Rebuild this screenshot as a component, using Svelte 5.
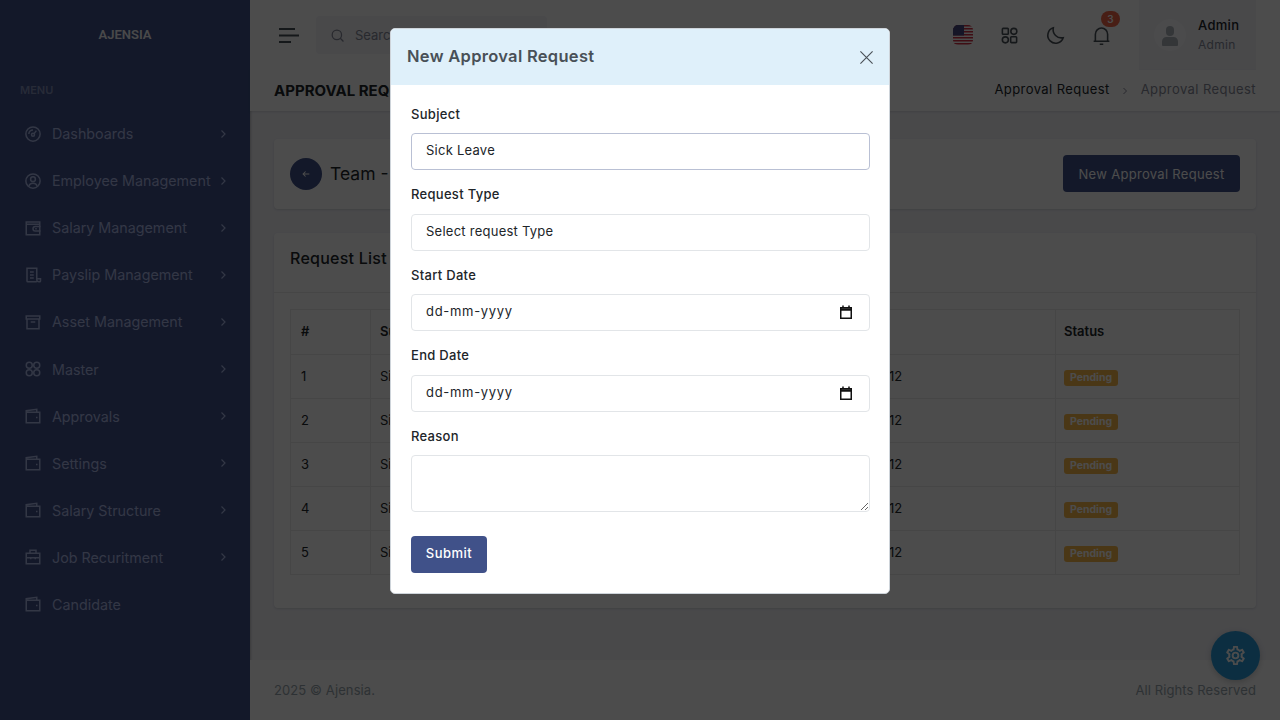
<script>
  const menu = [
    { label: 'Dashboards', icon: 'gauge', arrow: true },
    { label: 'Employee Management', icon: 'user', arrow: true },
    { label: 'Salary Management', icon: 'wallet', arrow: true },
    { label: 'Payslip Management', icon: 'bill', arrow: true },
    { label: 'Asset Management', icon: 'archive', arrow: true },
    { label: 'Master', icon: 'apps', arrow: true },
    { label: 'Approvals', icon: 'purse', arrow: true },
    { label: 'Settings', icon: 'purse', arrow: true },
    { label: 'Salary Structure', icon: 'purse', arrow: true },
    { label: 'Job Recuritment', icon: 'case', arrow: true },
    { label: 'Candidate', icon: 'purse', arrow: false }
  ]

  const rows = [1, 2, 3, 4, 5]
  const stripes = [0, 1, 2, 3, 4, 5, 6]
  const cog = 'M12,8A4,4 0 0,1 16,12A4,4 0 0,1 12,16A4,4 0 0,1 8,12A4,4 0 0,1 12,8M12,10A2,2 0 0,0 10,12A2,2 0 0,0 12,14A2,2 0 0,0 14,12A2,2 0 0,0 12,10M10,22C9.75,22 9.54,21.82 9.5,21.58L9.13,18.93C8.5,18.68 7.96,18.34 7.44,17.94L4.95,18.95C4.73,19.03 4.46,18.95 4.34,18.73L2.34,15.27C2.21,15.05 2.27,14.78 2.46,14.63L4.57,12.97L4.5,12L4.57,11L2.46,9.37C2.27,9.22 2.21,8.95 2.34,8.73L4.34,5.27C4.46,5.05 4.73,4.96 4.95,5.05L7.44,6.05C7.96,5.66 8.5,5.32 9.13,5.07L9.5,2.42C9.54,2.18 9.75,2 10,2H14C14.25,2 14.46,2.18 14.5,2.42L14.87,5.07C15.5,5.32 16.04,5.66 16.56,6.05L19.05,5.05C19.27,4.96 19.54,5.05 19.66,5.27L21.66,8.73C21.79,8.95 21.73,9.22 21.54,9.37L19.43,11L19.5,12L19.43,13L21.54,14.63C21.73,14.78 21.79,15.05 21.66,15.27L19.66,18.73C19.54,18.95 19.27,19.04 19.05,18.95L16.56,17.95C16.04,18.34 15.5,18.68 14.87,18.93L14.5,21.58C14.46,21.82 14.25,22 14,22H10M11.25,4L10.88,6.61C9.68,6.86 8.62,7.5 7.85,8.39L5.44,7.35L4.69,8.65L6.8,10.2C6.4,11.37 6.4,12.64 6.8,13.8L4.68,15.36L5.43,16.66L7.86,15.62C8.63,16.5 9.68,17.14 10.87,17.38L11.24,20H12.76L13.13,17.39C14.32,17.14 15.37,16.5 16.14,15.62L18.57,16.66L19.32,15.36L17.2,13.81C17.6,12.64 17.6,11.37 17.2,10.2L19.31,8.65L18.56,7.35L16.15,8.39C15.38,7.5 14.32,6.86 13.12,6.62L12.75,4H11.25Z'
</script>

{#snippet navIcon(name)}
  <svg class="nav-icon" viewBox="0 0 24 24" fill="none" stroke="currentColor" stroke-width="2">
    {#if name === 'gauge'}
      <circle cx="12" cy="12" r="9.5" />
      <circle cx="12" cy="13" r="2" />
      <path d="M13.5 11.5 16.5 7.5M6.5 12a5.5 5.5 0 0 1 5.5-5.5" />
    {:else if name === 'user'}
      <circle cx="12" cy="12" r="9.5" />
      <circle cx="12" cy="9.5" r="3.2" />
      <path d="M6.5 18.500c1-2.600 3-3.600 5.500-3.600s4.500 1 5.500 3.600" />
    {:else if name === 'wallet'}
      <path d="M21 7V4H3v17h18V7H3" />
      <path d="M22 10h-7a3 3 0 0 0 0 6h7" />
      <path d="M15 13h2" />
    {:else if name === 'bill'}
      <path d="M17 21H5a1 1 0 0 1-1-1V3h13v15a3 3 0 0 0 3 3h1a1 1 0 0 0 1-1v-3h-5" />
      <path d="M8 8h5M8 12h5M8 16h5" />
    {:else if name === 'archive'}
      <path d="M3 4h18v4H3zM4 8v13h16V8M9 12h6" />
    {:else if name === 'apps'}
      <circle cx="7" cy="7" r="4" />
      <circle cx="17" cy="7" r="4" />
      <circle cx="7" cy="17" r="4" />
      <circle cx="17" cy="17" r="4" />
    {:else if name === 'purse'}
      <path d="M3 7V21H21V7H3V5L17 3V7" />
      <path d="M16 14h2" />
    {:else}
      <path d="M8 7V3h8v4M3 7h18v14H3zM3 13h18M9 12v3M15 12v3" />
    {/if}
  </svg>
{/snippet}

<div class="layout">
  <aside class="sidebar">
    <div class="logo">AJENSIA</div>
    <div class="menu-title">MENU</div>
    <nav>
      {#each menu as item}
        <div class="nav-link">
          {@render navIcon(item.icon)}
          <span>{item.label}</span>
          {#if item.arrow}
            <svg class="chevron" viewBox="0 0 24 24" fill="none" stroke="currentColor" stroke-width="2.400">
              <path d="m9 5 7 7-7 7" />
            </svg>
          {/if}
        </div>
      {/each}
    </nav>
  </aside>

  <div class="main">
    <header class="topbar">
      <svg class="hamburger" viewBox="0 0 20 15" fill="none" stroke="currentColor" stroke-width="2">
        <path d="M0 1h16M0 7.500h20M0 14h12" />
      </svg>
      <div class="search">
        <svg viewBox="0 0 24 24" fill="none" stroke="currentColor" stroke-width="2">
          <circle cx="11" cy="11" r="7.500" />
          <path d="m16.500 16.500 5 5" />
        </svg>
        <span>Search...</span>
      </div>
      <div class="top-actions">
        <svg class="flag" viewBox="0 0 20 20">
          <defs>
            <clipPath id="flag-clip"><rect width="20" height="20" rx="5" /></clipPath>
          </defs>
          <g clip-path="url(#flag-clip)">
            <rect width="20" height="20" fill="#fff" />
            {#each stripes as s}
              <rect y={s * 3} width="20" height="1.500" fill="#d02f44" />
            {/each}
            <rect width="11" height="10.500" fill="#46467f" />
          </g>
        </svg>
        <svg class="top-icon apps" viewBox="0 0 24 24" fill="none" stroke="currentColor" stroke-width="2">
          <rect x="3" y="3" width="7.500" height="7.500" rx="1" />
          <circle cx="17.500" cy="6.750" r="3.800" />
          <circle cx="6.750" cy="17.500" r="3.800" />
          <rect x="13.500" y="13.500" width="7.500" height="7.500" rx="1" />
        </svg>
        <svg class="top-icon moon" viewBox="0 0 24 24" fill="none" stroke="currentColor" stroke-width="1.800">
          <path d="M9.500 3.200a9 9 0 1 0 11.300 11.300A9.500 9.500 0 0 1 9.500 3.200z" />
        </svg>
        <div class="bell">
          <svg class="top-icon" viewBox="0 0 24 24" fill="none" stroke="currentColor" stroke-width="1.800">
            <path d="M3 18.500h18M5 18.500v-8a7 7 0 0 1 14 0v8M10 22h4" />
          </svg>
          <span class="count">3</span>
        </div>
      </div>
      <div class="profile">
        <div class="avatar">
          <svg viewBox="0 0 24 24" fill="currentColor">
            <rect x="8" y="3" width="8" height="10" rx="4" />
            <path d="M4 22v-3.500A4.500 4.500 0 0 1 8.500 14h7a4.500 4.500 0 0 1 4.500 4.500V22a1 1 0 0 1-1 1H5a1 1 0 0 1-1-1z" />
          </svg>
        </div>
        <div class="who">
          <strong>Admin</strong>
          <small>Admin</small>
        </div>
      </div>
    </header>

    <div class="page-title">
      <h4>APPROVAL REQUEST</h4>
      <div class="crumbs">
        <span>Approval Request</span>
        <svg viewBox="0 0 24 24" fill="none" stroke="currentColor" stroke-width="2"><path d="m9 6 6 6-6 6" /></svg>
        <span class="muted">Approval Request</span>
      </div>
    </div>

    <main class="content">
      <section class="card head-card">
        <div class="back-title">
          <span class="back">
            <svg viewBox="0 0 24 24" fill="none" stroke="currentColor" stroke-width="2.500"><path d="M20 12H5M11 6l-6 6 6 6" /></svg>
          </span>
          <span class="team">Team - Approval Request</span>
        </div>
        <button class="btn-dark">New Approval Request</button>
      </section>

      <section class="card list-card">
        <h5 class="card-head">Request List</h5>
        <div class="card-body">
          <table>
            <colgroup>
              <col style="width: 80px" />
              <col style="width: 260px" />
              <col style="width: 189px" />
              <col style="width: 236px" />
              <col />
            </colgroup>
            <thead>
              <tr>
                <th>#</th>
                <th>Subject</th>
                <th>Request Type</th>
                <th>Date</th>
                <th>Status</th>
              </tr>
            </thead>
            <tbody>
              {#each rows as n}
                <tr>
                  <td>{n}</td>
                  <td>Sick Leave</td>
                  <td>Leave</td>
                  <td>2025-02-12</td>
                  <td><span class="pending">Pending</span></td>
                </tr>
              {/each}
            </tbody>
          </table>
        </div>
      </section>
    </main>

    <footer class="footer">
      <span>2025 © Ajensia.</span>
      <span>All Rights Reserved</span>
    </footer>
  </div>
</div>

<button class="fab" aria-label="Settings">
  <svg viewBox="0 0 24 24" fill="currentColor"><path d={cog} /></svg>
</button>

<div class="backdrop"></div>

<div class="modal-wrap">
  <div class="modal">
    <div class="modal-header">
      <h5>New Approval Request</h5>
      <svg viewBox="0 0 16 16" fill="none" stroke="currentColor" stroke-width="1.200" aria-label="Close">
        <path d="M1.500 1.500l13 13M14.500 1.500l-13 13" />
      </svg>
    </div>
    <form class="modal-body">
      <label for="subject">Subject</label>
      <input id="subject" class="field focused" type="text" value="Sick Leave" />

      <label for="type">Request Type</label>
      <div id="type" class="field">Select request Type</div>

      <label for="start">Start Date</label>
      <div id="start" class="field date">
        <span>dd-mm-yyyy</span>
        <svg viewBox="0 0 16 16" fill="none" stroke="#111" stroke-width="1.500">
          <path d="M2.750 3.750h10.500v10.500H2.750z" />
          <path d="M2.750 5.500h10.500" stroke-width="2.500" />
          <path d="M5 1.500v2M11 1.500v2" />
        </svg>
      </div>

      <label for="end">End Date</label>
      <div id="end" class="field date">
        <span>dd-mm-yyyy</span>
        <svg viewBox="0 0 16 16" fill="none" stroke="#111" stroke-width="1.500">
          <path d="M2.750 3.750h10.500v10.500H2.750z" />
          <path d="M2.750 5.500h10.500" stroke-width="2.500" />
          <path d="M5 1.500v2M11 1.500v2" />
        </svg>
      </div>

      <label for="reason">Reason</label>
      <textarea id="reason" class="field area"></textarea>

      <button type="button" class="submit">Submit</button>
    </form>
  </div>
</div>

<style>
  :global(body) {
    margin: 0;
    background: #f3f3f9;
    font-family: Inter, 'Liberation Sans', sans-serif;
    font-size: 13px;
    color: #212529;
    overflow: hidden;
  }
  .layout {
    display: flex;
    min-height: 720px;
  }
  .sidebar {
    width: 250px;
    flex: none;
    background: #405189;
    color: #abb9e8;
    box-shadow: 1px 0 2px rgba(0, 0, 0, 0.2);
  }
  .logo {
    height: 69px;
    display: flex;
    align-items: center;
    justify-content: center;
    color: #fff;
    font-family: Roboto, sans-serif;
    font-weight: 600;
    font-size: 13px;
    opacity: 0.95;
  }
  .menu-title {
    padding: 0 20px;
    margin-top: 13px;
    font-size: 11px;
    line-height: 16px;
    font-weight: 600;
    color: #838fb9;
  }
  nav {
    margin-top: 12px;
  }
  .nav-link {
    height: 47.1px;
    display: flex;
    align-items: center;
    padding: 0 21px 0 23.500px;
    font-size: 14.300px;
  }
  .nav-link span {
    margin-left: 10.500px;
    white-space: nowrap;
  }
  .nav-icon {
    width: 18px;
    height: 18px;
    flex: none;
  }
  .chevron {
    width: 12px;
    height: 12px;
    margin-left: auto;
  }
  .main {
    flex: 1;
    min-width: 0;
    display: flex;
    flex-direction: column;
  }
  .topbar {
    height: 70px;
    background: #fff;
    display: flex;
    align-items: center;
    padding: 0 24px 0 29px;
    color: #495057;
  }
  .hamburger {
    width: 20px;
    height: 15px;
    flex: none;
  }
  .search {
    width: 231px;
    height: 38px;
    margin-left: 17px;
    box-sizing: border-box;
    padding-left: 14px;
    background: #f3f3f9;
    border-radius: 4px;
    display: flex;
    align-items: center;
    gap: 10px;
    color: #878a99;
  }
  .search svg {
    width: 15px;
    height: 15px;
  }
  .top-actions {
    margin-left: auto;
    display: flex;
    align-items: center;
  }
  .flag {
    width: 20px;
    height: 20px;
  }
  .top-icon {
    width: 21px;
    height: 21px;
    color: #495057;
    display: block;
  }
  .top-icon.apps {
    width: 19px;
    height: 19px;
    margin-left: 27px;
  }
  .moon {
    margin-left: 26px;
  }
  .bell {
    position: relative;
    margin-left: 25px;
  }
  .count {
    position: absolute;
    top: -14px;
    left: 10px;
    width: 19px;
    height: 16px;
    border-radius: 9px;
    background: #f06548;
    color: #fff;
    font-size: 10px;
    font-weight: 600;
    text-align: center;
    line-height: 16px;
  }
  .profile {
    width: 117px;
    height: 70px;
    margin-left: 27px;
    box-sizing: border-box;
    background: #f3f3f9;
    padding-left: 15px;
    display: flex;
    align-items: center;
    gap: 12px;
  }
  .avatar {
    width: 32px;
    height: 32px;
    border-radius: 50%;
    background: #fbfbfd;
    color: #adb5bd;
    display: flex;
    align-items: center;
    justify-content: center;
  }
  .avatar svg {
    width: 24px;
    height: 24px;
  }
  .who {
    display: flex;
    flex-direction: column;
    gap: 4px;
    margin-top: -2px;
  }
  .who strong {
    font-weight: 500;
    font-size: 13px;
    letter-spacing: 0.3px;
    color: #212529;
  }
  .who small {
    font-size: 12px;
    letter-spacing: 0.3px;
    color: #878a99;
  }
  .page-title {
    height: 41px;
    background: #fff;
    box-shadow: 0 1px 2px rgba(56, 65, 74, 0.15);
    display: flex;
    align-items: center;
    justify-content: space-between;
    padding: 0 24px;
  }
  h4 {
    margin: 0;
    font-size: 15px;
    font-weight: 700;
    color: #212529;
  }
  .crumbs {
    display: flex;
    align-items: center;
    gap: 9.500px;
    letter-spacing: 0.42px;
    padding-bottom: 3px;
  }
  .crumbs svg {
    width: 12px;
    height: 12px;
    color: #878a99;
    margin-top: 3px;
  }
  .muted {
    color: #878a99;
  }
  .content {
    padding: 28px 24px 0;
  }
  .card {
    background: #fff;
    border-radius: 4px;
    box-shadow: 0 1px 2px rgba(56, 65, 74, 0.15);
    margin-bottom: 24px;
  }
  .head-card {
    height: 70px;
    box-sizing: border-box;
    padding: 0 16px 1px;
    display: flex;
    align-items: center;
    justify-content: space-between;
  }
  .back-title {
    display: flex;
    align-items: center;
    gap: 8px;
  }
  .back {
    width: 32px;
    height: 32px;
    border-radius: 50%;
    background: #405189;
    color: #fff;
    display: flex;
    align-items: center;
    justify-content: center;
  }
  .back svg {
    width: 10px;
    height: 10px;
  }
  .team {
    font-size: 17.500px;
    color: #212529;
  }
  .btn-dark {
    width: 177px;
    height: 37px;
    border: 0;
    border-radius: 4px;
    background: #405189;
    color: #fff;
    font: inherit;
    letter-spacing: 0.3px;
  }
  .card-head {
    margin: 0;
    height: 60px;
    box-sizing: border-box;
    padding: 16px 16px 0;
    border-bottom: 1px solid #e9ebec;
    font-size: 16px;
    line-height: 19px;
    font-weight: 500;
    letter-spacing: 0.25px;
  }
  .card-body {
    padding: 16px 16px 33px;
  }
  table {
    width: 100%;
    border-collapse: collapse;
    table-layout: fixed;
  }
  th,
  td {
    border: 1px solid #e9ebec;
    padding: 0 9px 1px;
    height: 44px;
    box-sizing: border-box;
    text-align: left;
    white-space: nowrap;
  }
  th {
    height: 45px;
    font-weight: 600;
    padding-bottom: 3px;
  }
  th:first-child,
  td:first-child {
    padding-left: 10px;
  }
  th:last-child {
    padding-left: 8px;
  }
  .pending {
    display: inline-block;
    width: 54px;
    height: 16px;
    border-radius: 3px;
    background: #f7b84b;
    color: #fff;
    font-size: 10.500px;
    font-weight: 700;
    line-height: 16px;
    text-align: center;
    margin-left: -1px;
    vertical-align: -1px;
  }
  .footer {
    margin-top: auto;
    height: 60px;
    box-sizing: border-box;
    padding: 0 24px 1px;
    background: #fff;
    display: flex;
    align-items: center;
    justify-content: space-between;
    color: #98a6ad;
    letter-spacing: 0.1px;
  }
  .fab {
    position: fixed;
    right: 20px;
    bottom: 40px;
    width: 49px;
    height: 49px;
    padding: 0;
    border: 0;
    border-radius: 50%;
    background: #299cdb;
    color: #fff;
    display: flex;
    align-items: center;
    justify-content: center;
    box-shadow: 0 2px 6px rgba(0, 0, 0, 0.2);
  }
  .fab svg {
    width: 23px;
    height: 23px;
  }
  .backdrop {
    position: fixed;
    inset: 0;
    background: rgba(0, 0, 0, 0.7);
  }
  .modal-wrap {
    position: fixed;
    inset: 0;
    display: flex;
    justify-content: center;
    align-items: flex-start;
    padding-top: 28px;
  }
  .modal {
    width: 500px;
    box-sizing: border-box;
    background: #fff;
    border: 1px solid #ced4da;
    border-radius: 5px;
    overflow: hidden;
  }
  .modal-header {
    height: 56px;
    box-sizing: border-box;
    background: #dff0fa;
    padding: 0 15px 2px 16px;
    display: flex;
    align-items: center;
    justify-content: space-between;
  }
  .modal-header h5 {
    margin: 0;
    font-size: 16.500px;
    font-weight: 600;
    letter-spacing: 0.3px;
    color: #495057;
  }
  .modal-header svg {
    width: 15px;
    height: 15px;
    color: #495057;
    margin-top: 2px;
  }
  .modal-body {
    padding: 20.500px 19px 20px 20px;
  }
  label {
    display: block;
    font-weight: 500;
    line-height: 16.500px;
    margin-bottom: 11px;
    letter-spacing: 0.3px;
  }
  .field {
    display: block;
    width: 100%;
    height: 37px;
    box-sizing: border-box;
    padding: 0 14px;
    margin-bottom: 16px;
    border: 1px solid #e2e5e8;
    border-radius: 4px;
    background: #fff;
    font: inherit;
    letter-spacing: 0.25px;
    color: #212529;
    line-height: 33px;
  }
  .focused {
    border-color: #b9c0d4;
    outline: none;
    padding-bottom: 3px;
  }
  .date {
    display: flex;
    align-items: center;
    justify-content: space-between;
    padding-right: 15px;
    letter-spacing: 0.7px;
  }
  .date span {
    margin-top: -2px;
  }
  .date svg {
    width: 16px;
    height: 16px;
    margin-top: -1px;
  }
  .area {
    height: 57px;
    margin-bottom: 24px;
    resize: vertical;
    line-height: 1.5;
  }
  .submit {
    display: block;
    width: 76px;
    height: 37px;
    border: 0;
    border-radius: 4px;
    background: #405189;
    color: #fff;
    font: inherit;
    font-weight: 500;
    letter-spacing: 0.5px;
    padding-bottom: 4px;
  }
</style>
